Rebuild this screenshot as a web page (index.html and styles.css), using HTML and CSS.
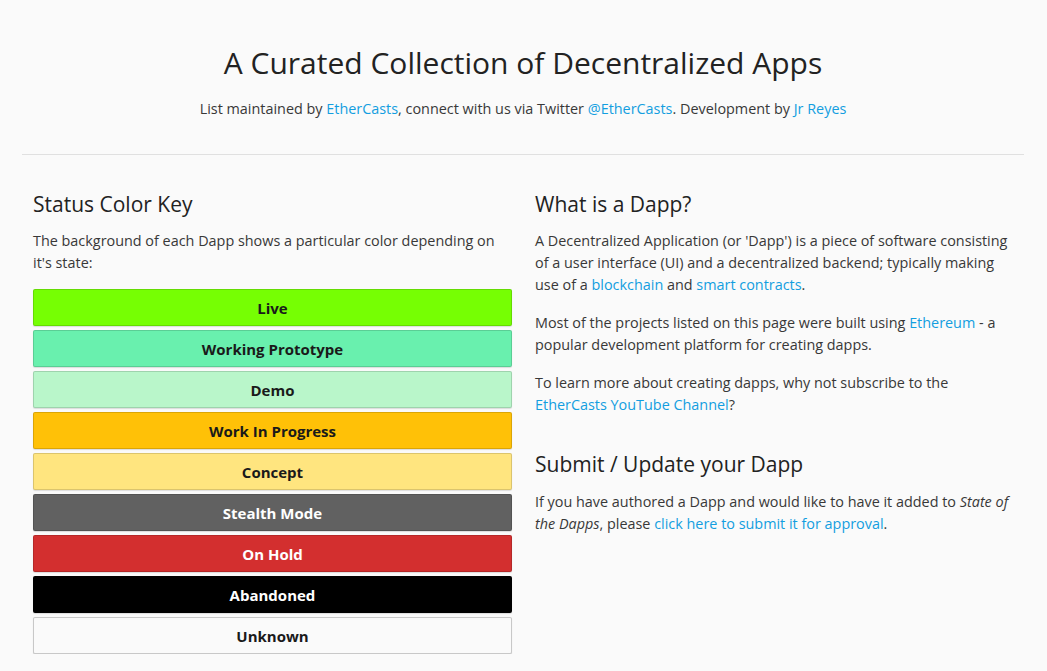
FILE: index.html
```html
<!DOCTYPE html>
<html lang="en">
<head>
<meta charset="utf-8">
<title>State of the Dapps</title>
<link rel="stylesheet" href="styles.css">
</head>
<body>
<div class="page">
  <header class="header">
    <h1 class="title">A Curated Collection of Decentralized Apps</h1>
    <p class="subtitle">List maintained by <a href="#">EtherCasts</a>, connect with us via Twitter <a href="#">@EtherCasts</a>. Development by <a href="#">Jr Reyes</a></p>
  </header>
  <hr class="divider">
  <div class="row">
    <section class="col">
      <h2 class="heading">Status Color Key</h2>
      <p class="text">The background of each Dapp shows a particular color depending on it's state:</p>
      <div class="keys">
        <div class="key live">Live</div>
        <div class="key proto">Working Prototype</div>
        <div class="key demo">Demo</div>
        <div class="key wip">Work In Progress</div>
        <div class="key concept">Concept</div>
        <div class="key stealth">Stealth Mode</div>
        <div class="key hold">On Hold</div>
        <div class="key abandoned">Abandoned</div>
        <div class="key unknown">Unknown</div>
      </div>
    </section>
    <section class="col">
      <h2 class="heading">What is a Dapp?</h2>
      <p class="text">A Decentralized Application (or 'Dapp') is a piece of software consisting of a user interface (UI) and a decentralized backend; typically making use of a <a href="#">blockchain</a> and <a href="#">smart contracts</a>.</p>
      <p class="text">Most of the projects listed on this page were built using <a href="#">Ethereum</a> - a popular development platform for creating dapps.</p>
      <p class="text">To learn more about creating dapps, why not subscribe to the <a href="#">EtherCasts YouTube Channel</a>?</p>
      <h2 class="heading second">Submit / Update your Dapp</h2>
      <p class="text after-second">If you have authored a Dapp and would like to have it added to <em>State of the Dapps</em>, please <a href="#">click here to submit it for approval</a>.</p>
    </section>
  </div>
</div>
</body>
</html>
```

FILE: styles.css
```css
html, body {
  margin: 0;
  padding: 0;
}
body {
  background: #fafafa;
  color: #383838;
  font-family: "Open Sans", "Liberation Sans", sans-serif;
  font-size: 14.4px;
  line-height: 22px;
}
a {
  color: #139ee0;
  text-decoration: none;
}
.page {
  margin: 0 23px 0 22px;
}
.header {
  padding-top: 45px;
  text-align: center;
}
.title {
  margin: 0;
  font-size: 30px;
  line-height: 36px;
  font-weight: 400;
  color: #222;
}
.subtitle {
  margin: 17px 0 0;
  line-height: 22px;
}
.divider {
  margin: 34px 0 0;
  border: 0;
  border-top: 1px solid #e0e0e0;
  height: 0;
}
.row {
  display: grid;
  grid-template-columns: 1fr 1fr;
  padding-top: 36px;
}
.col {
  padding: 0 11px;
}
.col + .col {
  padding-left: 12px;
}
.heading {
  margin: 0;
  font-size: 21px;
  line-height: 26px;
  font-weight: 400;
  color: #222;
}
.heading.second {
  margin-top: 35px;
}
.text {
  margin: 13px 0 0;
}
.text + .text {
  margin-top: 16px;
}
.text.after-second {
  margin-top: 14px;
}
.keys {
  margin-top: 15px;
  display: flex;
  flex-direction: column;
  gap: 4px;
}
.key {
  height: 35px;
  line-height: 36px;
  text-align: center;
  font-weight: 700;
  font-size: 15px;
  color: #1a1a1a;
  border: 1px solid rgba(0, 0, 0, 0.14);
  border-radius: 2px;
  box-shadow: 0 1px 1px rgba(0, 0, 0, 0.12);
}
.live { background: #76ff03; }
.proto { background: #69f0ae; }
.demo { background: #b9f6ca; }
.wip { background: #ffc107; }
.concept { background: #ffe57f; }
.stealth { background: #616161; color: #fff; }
.hold { background: #d32f2f; color: #fff; }
.abandoned { background: #000; color: #fff; }
.unknown { background: #fafafa; border-color: rgba(0, 0, 0, 0.2); }
```
